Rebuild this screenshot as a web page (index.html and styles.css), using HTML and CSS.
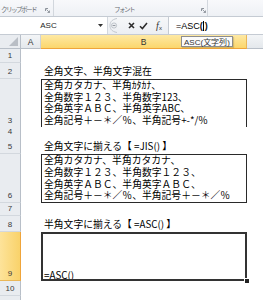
FILE: index.html
```html
<!DOCTYPE html>
<html lang="ja">
<head>
<meta charset="utf-8">
<title>ASC</title>
<link rel="stylesheet" href="styles.css">
</head>
<body>
<div class="app">
  <div class="ribbon">
    <div class="group g1">
      <span class="glabel">クリップボード</span>
      <svg class="launch" width="5" height="5" viewBox="0 0 5 5"><path d="M0.5 3V0.5H3" fill="none" stroke="#8d939b" stroke-width="1"/><path d="M1.5 1.5L4.5 4.5M4.5 2.5V4.5H2.5" fill="none" stroke="#8d939b" stroke-width="0.9"/></svg>
    </div>
    <div class="group g2">
      <span class="glabel">フォント</span>
      <svg class="launch" width="5" height="5" viewBox="0 0 5 5"><path d="M0.5 3V0.5H3" fill="none" stroke="#8d939b" stroke-width="1"/><path d="M1.5 1.5L4.5 4.5M4.5 2.5V4.5H2.5" fill="none" stroke="#8d939b" stroke-width="0.9"/></svg>
    </div>
    <div class="group g3"></div>
  </div>

  <div class="fbar">
    <div class="namebox">
      <span class="nametext">ASC</span>
      <span class="dd"><svg width="5" height="3" viewBox="0 0 5 3"><path d="M0 0H5L2.5 3Z" fill="#333"/></svg></span>
    </div>
    <div class="grip">
      <svg width="12" height="17" viewBox="0 0 12 17"><path d="M9 1.5C3 2.5 2 6 2 8.5S3 14.5 9 15.5" fill="none" stroke="#c3c8cf" stroke-width="1"/><circle cx="6" cy="8.5" r="2.6" fill="#eceef1" stroke="#b4bac2" stroke-width="0.8"/><path d="M4.6 8.5H7.4" stroke="#8a9099" stroke-width="0.9"/></svg>
    </div>
    <div class="fbtns">
      <span class="fbtn bx"><svg width="7" height="7" viewBox="0 0 7 7"><path d="M1 1L6 6M6 1L1 6" stroke="#2b2b2b" stroke-width="1.6"/></svg></span>
      <span class="fbtn bc"><svg width="9" height="8" viewBox="0 0 9 8"><path d="M1 4.2L3.4 6.6L8 1" fill="none" stroke="#2b2b2b" stroke-width="1.5"/></svg></span>
      <span class="fbtn bf"><i class="fx">f</i><span class="fxx">x</span></span>
    </div>
    <div class="finput"><span>=ASC</span><span class="par">(</span><span class="caret"></span><span class="par">)</span></div>
  </div>

  <div class="sheet">
    <div class="row hdr">
      <div class="corner"><svg width="9" height="9" viewBox="0 0 9 9"><path d="M9 0V9H0Z" fill="#b9bec5"/></svg></div>
      <div class="colh">A</div>
      <div class="colh sel">B</div>
      <div class="colh rest"></div>
    </div>

    <div class="row r14"><div class="rh">1</div><div class="ca"></div><div class="cb"></div><div class="cc"></div></div>
    <div class="row r16"><div class="rh">2</div><div class="ca"></div><div class="cb head">全角文字、半角文字混在</div><div class="cc"></div></div>
    <div class="row r48"><div class="rh">3</div><div class="ca"></div>
      <div class="cb box">
        <div>全角カタカナ、半角ｶﾀｶﾅ、</div>
        <div>全角数字１２３、半角数字123、</div>
        <div>全角英字ＡＢＣ、半角英字ABC、</div>
        <div>全角記号＋－＊／％、半角記号+-*/%</div>
      </div><div class="cc"></div></div>
    <div class="row r10"><div class="rh">4</div><div class="ca"></div><div class="cb"></div><div class="cc"></div></div>
    <div class="row r17"><div class="rh">5</div><div class="ca"></div><div class="cb head">全角文字に揃える【 =JIS() 】</div><div class="cc"></div></div>
    <div class="row r49"><div class="rh">6</div><div class="ca"></div>
      <div class="cb box">
        <div>全角カタカナ、半角カタカナ、</div>
        <div>全角数字１２３、半角数字１２３、</div>
        <div>全角英字ＡＢＣ、半角英字ＡＢＣ、</div>
        <div>全角記号＋－＊／％、半角記号＋－＊／％</div>
      </div><div class="cc"></div></div>
    <div class="row r13"><div class="rh">7</div><div class="ca"></div><div class="cb"></div><div class="cc"></div></div>
    <div class="row r16"><div class="rh">8</div><div class="ca"></div><div class="cb head">半角文字に揃える【 =ASC() 】</div><div class="cc"></div></div>
    <div class="row r49"><div class="rh rsel">9</div><div class="ca"></div>
      <div class="cb box active"><div class="edit">=ASC()</div><span class="handle"></span></div><div class="cc"></div></div>
    <div class="row r15"><div class="rh">10</div><div class="ca"></div><div class="cb"></div><div class="cc"></div></div>
    <div class="row r15"><div class="rh">11</div><div class="ca"></div><div class="cb"></div><div class="cc"></div></div>

    <div class="tip">ASC(<span class="tipj">文字列</span>)</div>
  </div>
</div>
</body>
</html>
```

FILE: styles.css
```css
* { box-sizing: border-box; }
html, body { margin: 0; padding: 0; }
body {
  width: 263px;
  height: 300px;
  overflow: hidden;
  background: #fff;
  font-family: "Liberation Sans", "Noto Sans CJK JP", sans-serif;
  color: #000;
}
.app { display: flex; flex-direction: column; height: 300px; }

/* ribbon */
.ribbon {
  display: flex;
  height: 17px;
  flex: none;
  background: linear-gradient(#f8f9fb, #eef1f5);
  border-bottom: 1px solid #c5cbd3;
}
.group {
  display: flex;
  align-items: flex-end;
  padding-bottom: 3px;
  border-right: 1px solid #d2d7dd;
}
.g1 { width: 54px; padding-left: 1px; }
.g2 { width: 154px; padding-left: 60px; }
.g3 { flex: 1; border-right: 0; }
.glabel {
  font-family: "Noto Sans CJK JP", sans-serif;
  font-size: 6.6px;
  line-height: 7px;
  letter-spacing: -1.6px;
  color: #6a6e74;
}
.launch { margin-left: auto; margin-right: 3px; }
.g2 .launch { margin-right: 1px; }

/* formula bar */
.fbar {
  display: flex;
  height: 18px;
  flex: none;
  background: linear-gradient(#f6f7f9, #eceff3);
  border-bottom: 1px solid #c5cbd3;
}
.namebox {
  width: 108px;
  display: flex;
  align-items: center;
  background: #fff;
  border-right: 1px solid #d3d8de;
}
.nametext {
  width: 97px;
  text-align: center;
  font-size: 8px;
  color: #1e1e1e;
}
.dd { width: 10px; display: flex; align-items: center; padding-left: 1px; }
.grip { width: 12px; display: flex; align-items: center; }
.fbtns { display: flex; align-items: center; padding-left: 5px; width: 48px; }
.fbtn { display: flex; align-items: center; justify-content: center; height: 17px; }
.bx { width: 12px; }
.bc { width: 13px; }
.bf { width: 18px; }
.fx {
  font-family: "Liberation Serif", serif;
  font-size: 10px;
  font-style: italic;
  color: #333;
}
.fxx {
  font-family: "Liberation Sans", sans-serif;
  font-size: 6px;
  color: #333;
  margin-top: 4px;
}
.finput {
  flex: 1;
  display: flex;
  align-items: center;
  background: #fff;
  border-left: 1px solid #c5cbd3;
  padding-left: 7px;
  font-size: 9px;
  color: #000;
}
.par { font-weight: 600; color: #111; }
.caret { width: 1px; height: 10px; background: #000; margin: 0 0.5px; }

/* sheet */
.sheet { position: relative; flex: 1; overflow: hidden; }
.row {
  display: grid;
  grid-template-columns: 21px 20px 206px 1fr;
}
.hdr { height: 14px; }
.r10 { height: 10px; }
.r13 { height: 13px; }
.r14 { height: 14px; }
.r15 { height: 15px; }
.r16 { height: 16px; }
.r17 { height: 17px; }
.r48 { height: 48px; }
.r49 { height: 49px; }

.corner {
  background: #e9ecf0;
  border-right: 1px solid #b8bfc8;
  border-bottom: 1px solid #b8bfc8;
  display: flex;
  align-items: flex-end;
  justify-content: flex-end;
  padding: 0 2px 2px 0;
}
.colh {
  background: linear-gradient(#f3f5f7, #e4e8ec);
  border-right: 1px solid #cdd2d9;
  border-bottom: 1px solid #b8bfc8;
  display: flex;
  align-items: center;
  justify-content: center;
  font-size: 8.5px;
  color: #333;
}
.colh.sel {
  background: linear-gradient(#fee9a4, #fbd66c);
  border-right: 1px solid #eab758;
  border-bottom: 1px solid #efa43a;
}
.colh.rest { border-right: 0; }

.rh {
  background: #e9ecf0;
  border-right: 1px solid #b8bfc8;
  border-bottom: 1px solid #d3d8de;
  display: flex;
  align-items: flex-end;
  justify-content: center;
  padding-bottom: 1px;
  font-size: 8px;
  line-height: 10px;
  color: #3a3a3a;
}
.rh.rsel {
  background: linear-gradient(90deg, #fde39a, #f9d26a);
  border-right: 1px solid #efa43a;
  border-bottom: 1px solid #eab758;
}
.ca, .cc { background: #fff; }
.cb {
  background: #fff;
  font-family: "Noto Sans CJK JP", sans-serif;
  font-size: 9.8px;
  white-space: nowrap;
}
.head {
  display: flex;
  align-items: flex-end;
  padding: 0 0 2px 3px;
  line-height: 12px;
}
.box {
  border: 1px solid #2a2a2a;
  display: flex;
  flex-direction: column;
  justify-content: flex-end;
  padding-left: 2px;
  line-height: 11.7px;
}
.active { position: relative; border-color: transparent; }
.active::after {
  content: "";
  position: absolute;
  left: -1px; top: -1px; right: -1px; bottom: -1px;
  border: 2px solid #333;
}
.edit { line-height: 8px; margin-bottom: 1px; }
.handle {
  position: absolute;
  right: -4px;
  bottom: -4px;
  width: 6px;
  height: 6px;
  background: #222;
  border: 1px solid #fff;
  z-index: 1;
}

.tip {
  position: absolute;
  left: 181px;
  top: 1px;
  height: 11px;
  padding: 0 2px;
  border: 1px solid #8d8d8d;
  background: #fbfbfb;
  box-shadow: 1px 1px 1px rgba(0,0,0,0.15);
  font-size: 8px;
  line-height: 9px;
  color: #333;
  white-space: nowrap;
}
.tipj { font-family: "Noto Sans CJK JP", sans-serif; font-size: 8px; }
```
